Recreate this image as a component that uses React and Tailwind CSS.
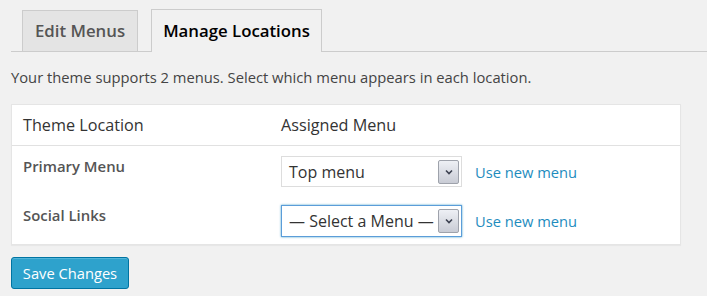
import React from "react";

const font = { fontFamily: '"Open Sans", "Noto Sans", sans-serif' };

const rows = [
  { label: "Primary Menu", value: "Top menu", focused: false },
  { label: "Social Links", value: "— Select a Menu —", focused: true },
];

// Fake select box with the old grey arrow button
const MenuSelect = ({ value, focused }) => (
  <div
    className={`flex items-center justify-between w-[181px] bg-white pl-[7px] pr-[2px] ${
      focused ? "h-[32px] border border-[#5b9dd9] shadow-[0_0_2px_rgba(30,140,190,0.8)]" : "h-[31px] border border-[#dddddd]"
    }`}
  >
    <span className="text-[16px] text-[#333] leading-none whitespace-nowrap">{value}</span>
    <span className="flex items-center justify-center w-[21px] h-[24px] border border-[#9ea2ab] rounded-[2px] bg-gradient-to-b from-[#eef0f5] to-[#c9ccd5]">
      <svg width="8" height="6" viewBox="0 0 8 6">
        <path d="M1 1.5 L4 4.5 L7 1.5" fill="none" stroke="#3c4150" strokeWidth="1.6" />
      </svg>
    </span>
  </div>
);

const App = () => {
  return (
    <div className="w-[707px] h-[296px] bg-[#f1f1f1] pl-[11px] overflow-hidden" style={font}>

      {/* Tabs */}
      <div className="flex items-end pt-[10px] pl-[11px] gap-[13px] border-b border-[#cccccc] h-[52px]">
        <div className="w-[116px] h-[42px] flex items-center justify-center border border-[#cccccc] bg-[#e4e4e4] text-[#555] text-[16.8px] font-semibold -mb-px">
          Edit Menus
        </div>
        <div className="w-[171px] h-[43px] flex items-center justify-center border border-b-0 border-[#cccccc] bg-[#f1f1f1] text-black text-[16.8px] font-semibold -mb-px">
          Manage Locations
        </div>
      </div>

      {/* Description */}
      <p className="text-[14.75px] text-[#444] mt-[15px] leading-[20px]">
        Your theme supports 2 menus. Select which menu appears in each location.
      </p>

      {/* Locations table */}
      <div className="mt-[17px] w-[670px] bg-white border border-[#e5e5e5] shadow-[0_1px_1px_rgba(0,0,0,0.04)]">
        <div className="flex items-center h-[41px] border-b border-[#e1e1e1] text-[16.2px] text-[#333]">
          <div className="w-[269px] pl-[11px]">Theme Location</div>
          <div>Assigned Menu</div>
        </div>
        <div className="flex flex-col gap-[18px] pt-[10px] pb-[7px]">
          {rows.map((row) => (
            <div key={row.label} className="flex items-start">
              <div className="w-[269px] pl-[11px] text-[14.9px] text-[#555] font-semibold leading-[20px]">
                {row.label}
              </div>
              <MenuSelect value={row.value} focused={row.focused} />
              <a className="ml-[13px] mt-[6px] text-[14.7px] text-[#1e8cbe] leading-[20px]">
                Use new menu
              </a>
            </div>
          ))}
        </div>
      </div>

      {/* Save */}
      <button className="mt-[12px] w-[118px] h-[32px] rounded-[3px] bg-[#2ea2cc] border border-[#0074a2] text-white text-[14.7px] shadow-[inset_0_1px_0_rgba(120,200,230,0.5)]">
        Save Changes
      </button>

    </div>
  );
};

export default App;
